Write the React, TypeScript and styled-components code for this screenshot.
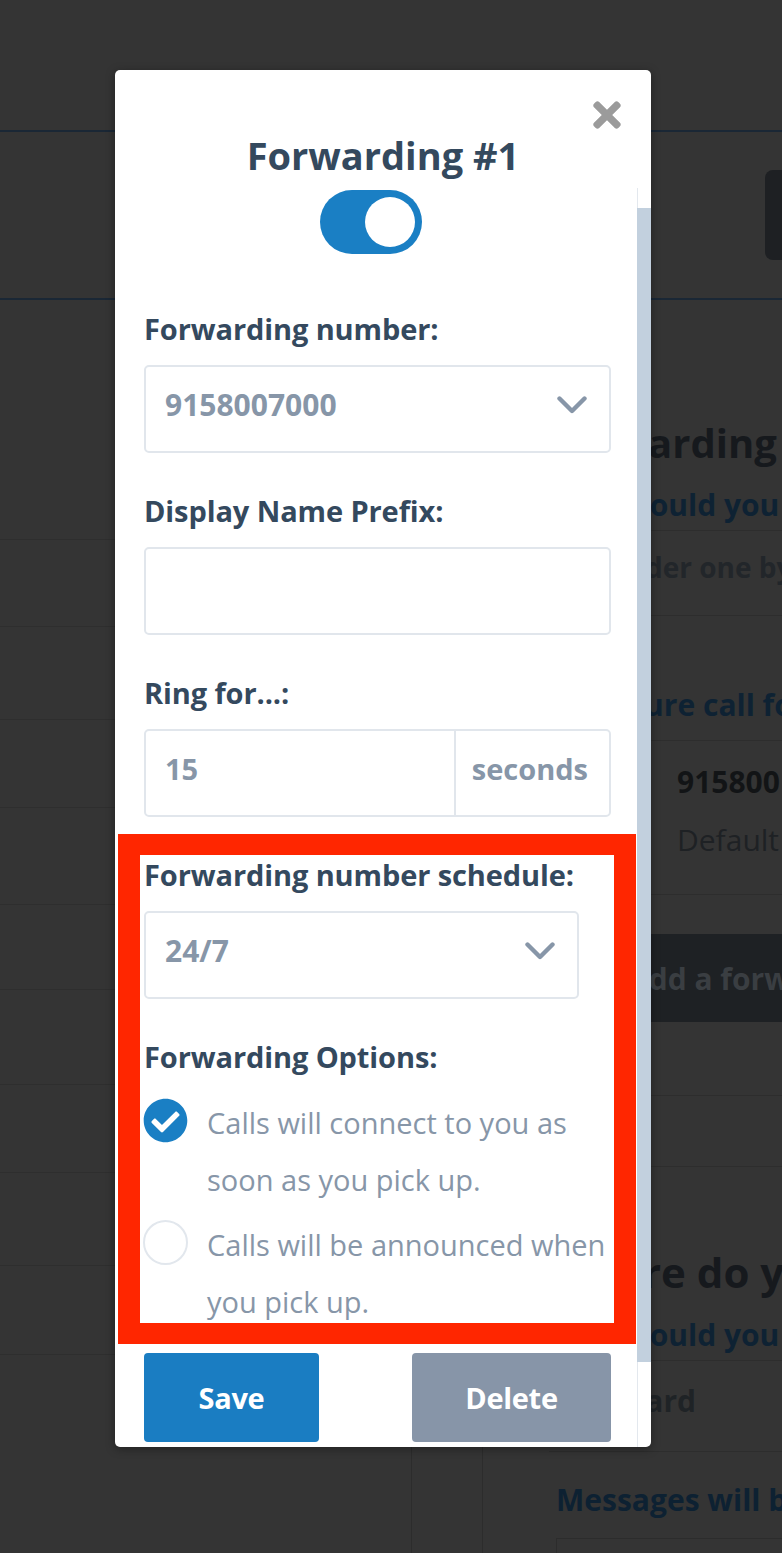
import React from "react";
import styled, { createGlobalStyle } from "styled-components";
import { FaTimes, FaCheckCircle } from "react-icons/fa";

const GlobalStyle = createGlobalStyle`
  html, body {
    margin: 0;
    padding: 0;
  }
  body {
    background: #343434;
    font-family: "Open Sans", Lato, sans-serif;
    overflow: hidden;
  }
`;

// Page behind the dialog (already dimmed)
const Page = styled.div`
  position: relative;
  width: 782px;
  height: 1553px;
  overflow: hidden;
  background: #343434;
`;

const TopBar = styled.header`
  height: 130px;
  border-bottom: 2px solid #1a2735;
`;

const SubBar = styled.div`
  height: 166px;
  display: flex;
  justify-content: flex-end;
  align-items: flex-start;
  border-bottom: 2px solid #1a2735;
`;

const GhostButton = styled.div`
  width: 117px;
  height: 90px;
  margin-top: 38px;
  margin-right: -100px;
  background: #1e2023;
  border-radius: 8px;
`;

const Main = styled.div`
  display: grid;
  grid-template-columns: 412px 1fr;
  column-gap: 70px;
`;

const LeftCol = styled.div`
  border-right: 1px solid #2c2c2c;
  min-height: 1253px;
`;

const LeftRow = styled.div<{ $h: number }>`
  height: ${(p) => p.$h}px;
  box-sizing: border-box;
  border-bottom: 1px solid #2e2e2e;
`;

const RightCol = styled.div`
  border-left: 1px solid #2c2c2c;
  padding-left: 66px;
  white-space: nowrap;
`;

const Block = styled.div<{
  $h: number;
  $pb: number;
  $shift?: number;
  $indent?: number;
  $divider?: boolean;
}>`
  height: ${(p) => p.$h}px;
  box-sizing: border-box;
  display: flex;
  flex-direction: column;
  justify-content: flex-end;
  padding-bottom: ${(p) => p.$pb}px;
  padding-left: ${(p) => p.$indent ?? 0}px;
  margin-left: ${(p) => p.$shift ?? 0}px;
  border-bottom: ${(p) => (p.$divider ? "1px solid #2d2d2d" : "none")};
`;

const BgText = styled.div<{ $size: number; $color: string; $weight?: number; $lh?: number }>`
  font-size: ${(p) => p.$size}px;
  line-height: ${(p) => p.$lh ?? Math.round(p.$size * 1.36)}px;
  font-weight: ${(p) => p.$weight ?? 700};
  color: ${(p) => p.$color};
`;

const BgButton = styled.div`
  height: 88px;
  margin-top: 39px;
  margin-right: -40px;
  padding-left: 79px;
  display: flex;
  align-items: center;
  background: #1e2124;
  color: #3a3e42;
  font-size: 30px;
  font-weight: 700;
`;

const BgBox = styled.div`
  height: 40px;
  margin-left: 7px;
  border-top: 1px solid #2c2c2c;
  border-left: 1px solid #2c2c2c;
`;

// Dialog
const Modal = styled.div`
  position: absolute;
  left: 115px;
  top: 70px;
  width: 536px;
  height: 1377px;
  display: flex;
  flex-direction: column;
  background: #fff;
  border-radius: 5px;
  overflow: hidden;
  box-shadow: 0 2px 10px rgba(0, 0, 0, 0.35);
`;

const ModalHeader = styled.div`
  position: relative;
  flex-shrink: 0;
  height: 118px;
  box-sizing: border-box;
  padding-top: 61px;
  text-align: center;
`;

const Title = styled.h2`
  margin: 0;
  font-size: 38px;
  line-height: 48px;
  font-weight: 700;
  color: #34495e;
`;

const CloseButton = styled.button`
  position: absolute;
  top: 25px;
  right: 30px;
  width: 28px;
  height: 40px;
  padding: 0;
  border: 0;
  background: none;
  color: #9b9b9b;
  display: flex;
  align-items: center;
  justify-content: center;
`;

const ModalBody = styled.div`
  flex: 1;
  min-height: 0;
  display: flex;
`;

const Scroller = styled.div`
  flex: 1;
  overflow: hidden;
  padding: 2px 26px 0 29px;
`;

const ScrollTrack = styled.div`
  width: 14px;
  flex-shrink: 0;
  box-sizing: border-box;
  border-left: 1px solid #e3e8ee;
`;

const ScrollThumb = styled.div`
  height: 1154px;
  margin-top: 20px;
  margin-left: -1px;
  background: #c2d0de;
`;

const ToggleRow = styled.div`
  display: flex;
  justify-content: center;
  padding-right: 13px;
`;

const Toggle = styled.div<{ $on: boolean }>`
  width: 102px;
  height: 64px;
  box-sizing: border-box;
  padding: 7px;
  border-radius: 32px;
  display: flex;
  justify-content: ${(p) => (p.$on ? "flex-end" : "flex-start")};
  background: ${(p) => (p.$on ? "#1a7fc4" : "#c2d0de")};
`;

const Knob = styled.span`
  width: 50px;
  height: 50px;
  border-radius: 50%;
  background: #fff;
`;

const Label = styled.div<{ $mt: number }>`
  margin-top: ${(p) => p.$mt}px;
  font-size: 29px;
  line-height: 40px;
  font-weight: 700;
  letter-spacing: -0.1px;
  color: #34495e;
  white-space: nowrap;
`;

const FieldBox = styled.div<{ $narrow?: boolean }>`
  margin-top: 16px;
  margin-right: ${(p) => (p.$narrow ? 32 : 0)}px;
  height: 88px;
  box-sizing: border-box;
  display: flex;
  align-items: center;
  padding: 0 22px 8px 19px;
  border: 2px solid #e1e6ec;
  border-radius: 5px;
  font-size: 30px;
  line-height: 40px;
  font-weight: 700;
  color: #8796a8;
`;

const Value = styled.span`
  flex: 1;
`;

const InputGroup = styled.div`
  margin-top: 16px;
  height: 88px;
  box-sizing: border-box;
  display: flex;
  border: 2px solid #e1e6ec;
  border-radius: 5px;
  font-size: 29px;
  line-height: 40px;
  font-weight: 700;
  color: #8796a8;
`;

const GroupInput = styled.div`
  flex: 1;
  display: flex;
  align-items: center;
  padding: 0 0 8px 19px;
`;

const Addon = styled.div`
  width: 155px;
  box-sizing: border-box;
  display: flex;
  align-items: center;
  justify-content: flex-end;
  padding: 0 21px 8px 0;
  border-left: 2px solid #e1e6ec;
`;

const Highlight = styled.section`
  margin: 17px -25px 0 -26px;
  padding: 0 3px 0 4px;
  border-style: solid;
  border-color: #ff2600;
  border-width: 21px 22px;
`;

const OptionList = styled.div`
  margin-top: 17px;
  margin-bottom: -7px;
  display: flex;
  flex-direction: column;
  gap: 8px;
`;

const Option = styled.div`
  display: flex;
  align-items: flex-start;
  gap: 19px;
  margin-left: -1px;
`;

const EmptyCircle = styled.span`
  width: 45px;
  height: 45px;
  margin-top: 4px;
  flex-shrink: 0;
  box-sizing: border-box;
  border: 2px solid #e2e7ed;
  border-radius: 50%;
`;

const CheckIcon = styled.span`
  width: 45px;
  height: 45px;
  margin-top: 4px;
  flex-shrink: 0;
  display: flex;
  color: #1a7fc4;
`;

const OptionText = styled.div`
  font-size: 29px;
  line-height: 57px;
  font-weight: 400;
  color: #8796a8;
  white-space: nowrap;
`;

const ButtonRow = styled.div`
  margin-top: 9px;
  display: flex;
  justify-content: space-between;
`;

const ActionButton = styled.button<{ $variant: "primary" | "muted" }>`
  width: ${(p) => (p.$variant === "primary" ? 175 : 199)}px;
  height: 89px;
  border: 0;
  border-radius: 4px;
  background: ${(p) => (p.$variant === "primary" ? "#1a7dc2" : "#8795a8")};
  color: #fff;
  font-family: inherit;
  font-size: 29px;
  font-weight: 700;
  letter-spacing: -0.3px;
`;

const Chevron = () => (
  <svg width="30" height="18" viewBox="0 0 30 18" fill="none">
    <path d="M2.5 2.5 L15 15 L27.5 2.5" stroke="#8796a8" strokeWidth="4.4" strokeLinecap="round" strokeLinejoin="round" />
  </svg>
);

const leftRows = [240, 87, 93, 88, 97, 85, 95, 88, 93, 89];

export default function App() {
  return (
    <Page>
      <GlobalStyle />
      <TopBar />
      <SubBar>
        <GhostButton />
      </SubBar>
      <Main>
        <LeftCol>
          {leftRows.map((h, i) => (
            <LeftRow key={i} $h={h} />
          ))}
        </LeftCol>
        <RightCol>
          <Block $h={170} $pb={0}>
            <BgText $size={40} $color="#16191d">Forwarding</BgText>
          </Block>
          <Block $h={61} $pb={5} $divider>
            <BgText $size={30} $color="#0e2233">How would you</BgText>
          </Block>
          <Block $h={85} $pb={29} $shift={-12} $divider>
            <BgText $size={28} $color="#22262a">All in order one by one</BgText>
          </Block>
          <Block $h={125} $pb={15} $divider>
            <BgText $size={30} $color="#0e2233">Configure call forwarding</BgText>
          </Block>
          <Block $h={154} $pb={25} $indent={128} $divider>
            <BgText $size={30} $lh={58} $color="#121416">915800</BgText>
            <BgText $size={30} $lh={58} $weight={400} $color="#1e2124">Default</BgText>
          </Block>
          <BgButton>Add a forwarding number</BgButton>
          <Block $h={74} $pb={0} $divider />
          <Block $h={71} $pb={0} $divider />
          <Block $h={133} $pb={0}>
            <BgText $size={42} $color="#16191d">Where do you want messages?</BgText>
          </Block>
          <Block $h={61} $pb={5} $divider>
            <BgText $size={30} $color="#0e2233">How would you</BgText>
          </Block>
          <Block $h={91} $pb={30} $indent={22} $divider>
            <BgText $size={30} $color="#1f2326">Forward</BgText>
          </Block>
          <Block $h={86} $pb={18} $indent={7}>
            <BgText $size={30} $color="#0d2132">Messages will be sent</BgText>
          </Block>
          <BgBox />
        </RightCol>
      </Main>

      <Modal>
        <ModalHeader>
          <Title>Forwarding #1</Title>
          <CloseButton aria-label="Close">
            <FaTimes size={40} />
          </CloseButton>
        </ModalHeader>
        <ModalBody>
          <Scroller>
            <ToggleRow>
              <Toggle $on>
                <Knob />
              </Toggle>
            </ToggleRow>

            <Label $mt={55}>Forwarding number:</Label>
            <FieldBox>
              <Value>9158007000</Value>
              <Chevron />
            </FieldBox>

            <Label $mt={38}>Display Name Prefix:</Label>
            <FieldBox />

            <Label $mt={38}>Ring for...:</Label>
            <InputGroup>
              <GroupInput>15</GroupInput>
              <Addon>seconds</Addon>
            </InputGroup>

            <Highlight>
              <Label $mt={0}>Forwarding number schedule:</Label>
              <FieldBox $narrow>
                <Value>24/7</Value>
                <Chevron />
              </FieldBox>

              <Label $mt={38}>Forwarding Options:</Label>
              <OptionList>
                <Option>
                  <CheckIcon>
                    <FaCheckCircle size={45} />
                  </CheckIcon>
                  <OptionText>
                    Calls will connect to you as
                    <br />
                    soon as you pick up.
                  </OptionText>
                </Option>
                <Option>
                  <EmptyCircle />
                  <OptionText>
                    Calls will be announced when
                    <br />
                    you pick up.
                  </OptionText>
                </Option>
              </OptionList>
            </Highlight>

            <ButtonRow>
              <ActionButton $variant="primary">Save</ActionButton>
              <ActionButton $variant="muted">Delete</ActionButton>
            </ButtonRow>
          </Scroller>
          <ScrollTrack>
            <ScrollThumb />
          </ScrollTrack>
        </ModalBody>
      </Modal>
    </Page>
  );
}
